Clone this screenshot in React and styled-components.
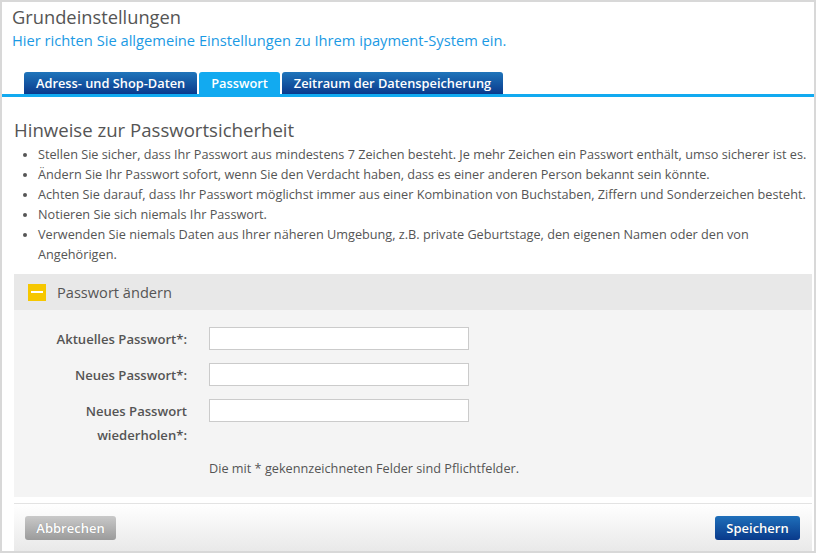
import React from 'react';
import styled, { createGlobalStyle } from 'styled-components';

const GlobalStyle = createGlobalStyle`
  html, body {
    margin: 0;
    padding: 0;
    background: #fff;
  }
  body {
    font-family: 'Open Sans', 'Liberation Sans', sans-serif;
    color: #555;
  }
  * {
    box-sizing: border-box;
  }
`;

const Frame = styled.div`
  width: 816px;
  height: 553px;
  border: 2px solid #d8d8d8;
  background: #fff;
  display: flex;
  flex-direction: column;
  overflow: hidden;
`;

const PageHeader = styled.div`
  padding: 3px 10px 0 10px;
`;

const Title = styled.h1`
  margin: 0;
  font-size: 18.3px;
  font-weight: 400;
  line-height: 24px;
  color: #555;
`;

const Subtitle = styled.p`
  margin: 0;
  font-size: 14.7px;
  line-height: 22px;
  color: #1b9ae4;
`;

const TabBar = styled.div`
  display: flex;
  gap: 2px;
  margin-top: 21px;
  padding-left: 22px;
  border-bottom: 3px solid #12aaf0;
`;

const Tab = styled.div`
  height: 22px;
  padding: 0 12px;
  display: flex;
  align-items: center;
  font-size: 12.8px;
  font-weight: 600;
  color: #fff;
  border-radius: 3px 3px 0 0;
  background: ${(p) =>
    p.$active ? '#12aaf0' : 'linear-gradient(to bottom, #1f75bb 0%, #0a3a8c 100%)'};
`;

const Content = styled.div`
  flex: 1;
  display: flex;
  flex-direction: column;
  padding: 0 2px 0 12px;
`;

const SectionTitle = styled.h2`
  margin: 21px 0 0 0;
  font-size: 18.6px;
  font-weight: 400;
  line-height: 24px;
  color: #555;
`;

const HintList = styled.ul`
  margin: 2px 0 0 0;
  padding-left: 24px;
  font-size: 12.7px;
  line-height: 20px;
  color: #555;
  li::marker {
    font-size: 11px;
  }
`;

const Panel = styled.div`
  margin-top: 10px;
  display: flex;
  flex-direction: column;
`;

const PanelHead = styled.div`
  height: 36px;
  background: #e8e8e8;
  display: flex;
  align-items: center;
  gap: 11px;
  padding-left: 14px;
  font-size: 14.6px;
  color: #555;
`;

const Toggle = styled.span`
  width: 18px;
  height: 17px;
  background: #f6c700;
  display: flex;
  align-items: center;
  justify-content: center;
  &::after {
    content: '';
    width: 12px;
    height: 2px;
    background: #fff;
  }
`;

const PanelBody = styled.div`
  background: #f4f4f4;
  padding: 17px 0 19px 0;
`;

const FormGrid = styled.div`
  display: grid;
  grid-template-columns: 173px 260px;
  column-gap: 22px;
  row-gap: 12px;
  align-items: start;
`;

const Label = styled.label`
  text-align: right;
  font-size: 13.1px;
  font-weight: 600;
  line-height: 24px;
  color: #555;
`;

const Input = styled.input`
  height: 23px;
  width: 260px;
  border: 1px solid #cbcbcb;
  background: #fff;
  margin: 0;
  padding: 2px 4px;
  font: inherit;
`;

const Note = styled.p`
  margin: 11px 0 0 195px;
  font-size: 12.7px;
  line-height: 20px;
  color: #555;
`;

const Footer = styled.div`
  margin-top: 6px;
  flex: 1;
  border-top: 1px solid #e3e3e3;
  background: linear-gradient(to bottom, #ffffff 0%, #e9e9e9 100%);
  display: flex;
  justify-content: space-between;
  align-items: flex-start;
  padding: 12px 12px 0 11px;
`;

const Button = styled.button`
  height: 24px;
  padding: 0 10px;
  border: none;
  border-radius: 3px;
  font-family: 'Open Sans', 'Liberation Sans', sans-serif;
  font-size: 13px;
  font-weight: 600;
  color: #fff;
  text-shadow: 0 0 1px rgba(0, 0, 0, 0.25);
  width: ${(p) => p.$w}px;
  background: ${(p) =>
    p.$primary
      ? 'linear-gradient(to bottom, #1f6fba 0%, #093a8b 100%)'
      : 'linear-gradient(to bottom, #c9c9c9 0%, #9b9b9b 100%)'};
`;

const hints = [
  'Stellen Sie sicher, dass Ihr Passwort aus mindestens 7 Zeichen besteht. Je mehr Zeichen ein Passwort enthält, umso sicherer ist es.',
  'Ändern Sie Ihr Passwort sofort, wenn Sie den Verdacht haben, dass es einer anderen Person bekannt sein könnte.',
  'Achten Sie darauf, dass Ihr Passwort möglichst immer aus einer Kombination von Buchstaben, Ziffern und Sonderzeichen besteht.',
  'Notieren Sie sich niemals Ihr Passwort.',
  'Verwenden Sie niemals Daten aus Ihrer näheren Umgebung, z.B. private Geburtstage, den eigenen Namen oder den von Angehörigen.',
];

const App = () => {
  return (
    <>
      <GlobalStyle />
      <Frame>
        <PageHeader>
          <Title>Grundeinstellungen</Title>
          <Subtitle>Hier richten Sie allgemeine Einstellungen zu Ihrem ipayment-System ein.</Subtitle>
        </PageHeader>
        <TabBar>
          <Tab>Adress- und Shop-Daten</Tab>
          <Tab $active>Passwort</Tab>
          <Tab>Zeitraum der Datenspeicherung</Tab>
        </TabBar>
        <Content>
          <SectionTitle>Hinweise zur Passwortsicherheit</SectionTitle>
          <HintList>
            {hints.map((h) => (
              <li key={h}>{h}</li>
            ))}
          </HintList>
          <Panel>
            <PanelHead>
              <Toggle />
              Passwort ändern
            </PanelHead>
            <PanelBody>
              <FormGrid>
                <Label>Aktuelles Passwort*:</Label>
                <Input type="password" />
                <Label>Neues Passwort*:</Label>
                <Input type="password" />
                <Label>
                  Neues Passwort
                  <br />
                  wiederholen*:
                </Label>
                <Input type="password" />
              </FormGrid>
              <Note>Die mit * gekennzeichneten Felder sind Pflichtfelder.</Note>
            </PanelBody>
          </Panel>
          <Footer>
            <Button $w={91}>Abbrechen</Button>
            <Button $primary $w={85}>Speichern</Button>
          </Footer>
        </Content>
      </Frame>
    </>
  );
};

export default App;
